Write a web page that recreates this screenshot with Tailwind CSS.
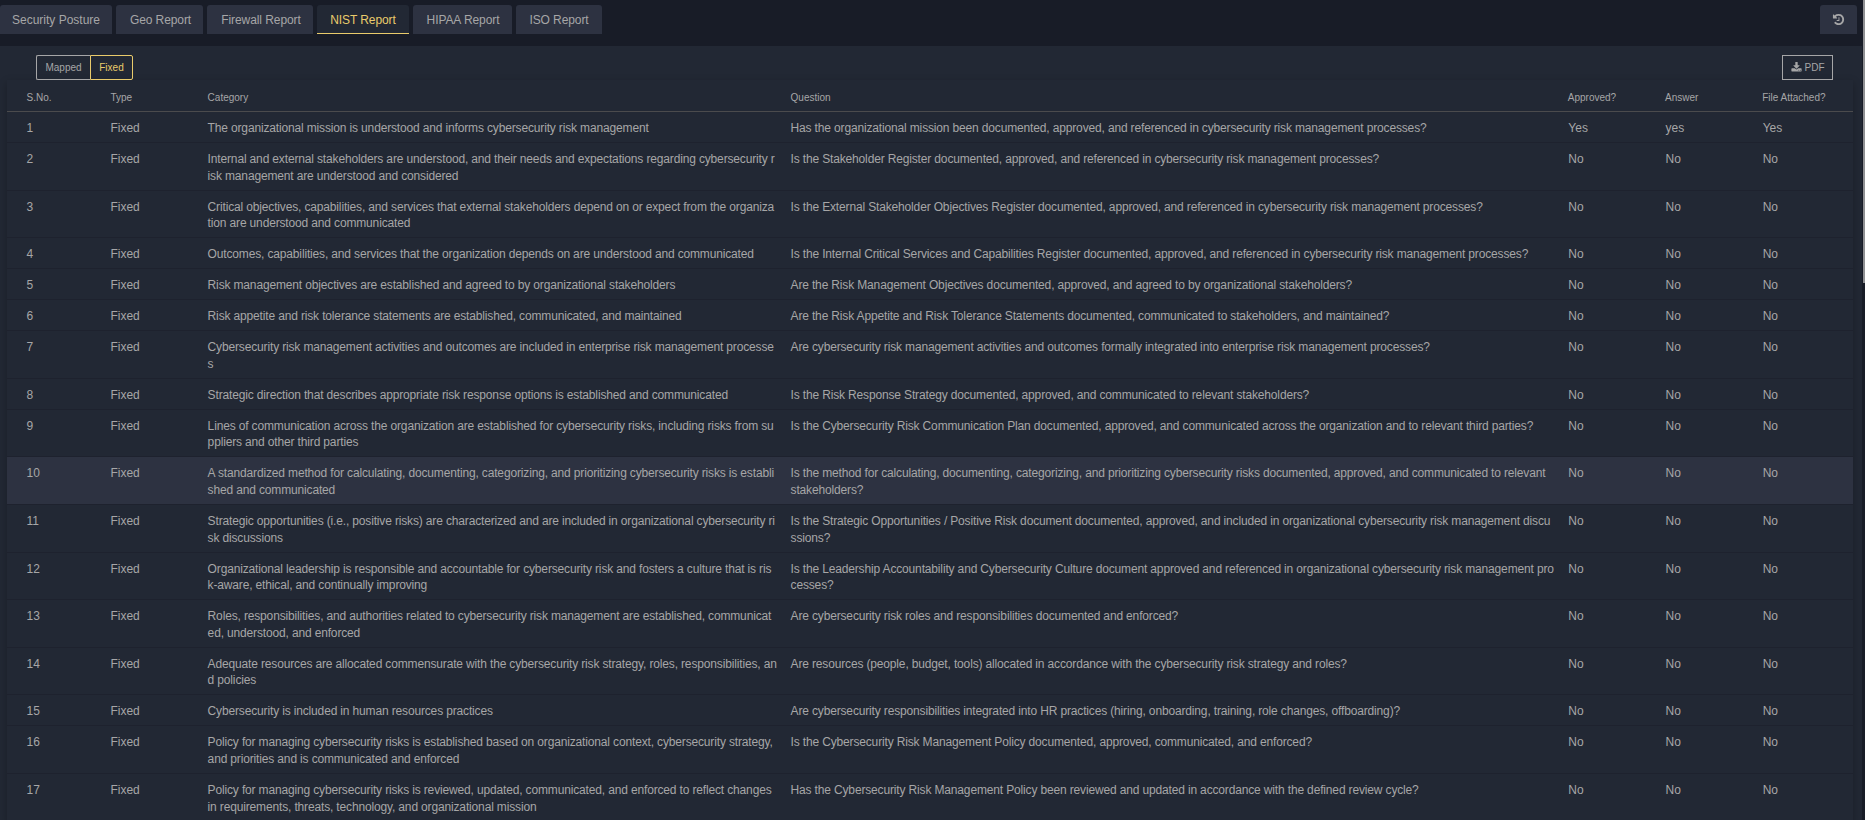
<!DOCTYPE html>
<html lang="en">
<head>
  <meta charset="UTF-8" />
  <meta name="viewport" content="width=device-width, initial-scale=1.0" />
  <title>NIST Report</title>
  <script src="https://cdn.jsdelivr.net/npm/@tailwindcss/browser@4"></script>
</head>
<body class="relative h-screen overflow-hidden bg-[#181c27] font-['Liberation_Sans',Arial,sans-serif] text-xs text-[#a6a6a7]">

  <!-- Report tabs -->
  <nav class="flex h-[46px] items-start gap-1 pt-[5px] pr-2 tracking-[-0.08px]">
    <button class="h-[29px] rounded-t-[3px] bg-[#2d3241] w-28 tracking-normal">Security Posture</button>
    <button class="h-[29px] rounded-t-[3px] bg-[#2d3241] w-[87px] pl-0.5">Geo Report</button>
    <button class="h-[29px] rounded-t-[3px] bg-[#2d3241] w-[106px] pl-0.5">Firewall Report</button>
    <button class="h-[29px] rounded-t-[3px] bg-[#222834] w-[92px] border-b border-[#e9cb6b] pt-px text-[#e9cb6b]">NIST Report</button>
    <button class="h-[29px] rounded-t-[3px] bg-[#2d3241] w-[99px] pl-px">HIPAA Report</button>
    <button class="h-[29px] rounded-t-[3px] bg-[#2d3241] w-[86px]">ISO Report</button>
    <button class="ml-auto flex h-[29px] w-[37px] items-center justify-center rounded-t-[3px] bg-[#2d3241]" aria-label="History">
      <svg class="size-[13px]" viewBox="0 0 1792 1792" fill="currentColor"><path d="M1664 896q0 156-61 298t-164 245-245 164-298 61q-172 0-327-72.5t-264-204.5q-7-10-6.5-22.5t8.500-20.500l137-138q10-9 25-9 16 2 23 12 73 95 179 147t225 52q104 0 198.500-40.500t163.500-109.500 109.500-163.500 40.500-198.500-40.500-198.500-109.500-163.500-163.500-109.500-198.500-40.500q-98 0-188 35.500t-160 101.500l137 138q31 30 14 69-17 40-59 40h-448q-26 0-45-19t-19-45v-448q0-42 40-59 39-17 69 14l130 129q107-101 244.500-156.500t284.500-55.500q156 0 298 61t245 164 164 245 61 298zm-640-288v448q0 14-9 23t-23 9h-320q-14 0-23-9t-9-23v-64q0-14 9-23t23-9h224v-352q0-14 9-23t23-9h64q14 0 23 9t9 23z"/></svg>
    </button>
  </nav>

  <main class="mr-[3px] bg-[#222834]">
    <div class="flex h-[34px] items-end justify-between pr-[29px] pl-9 text-[10px]">
      <div class="flex">
        <button class="h-[25px] w-[54px] rounded-l-[2px] border border-r-0 border-[#a6a6a7]">Mapped</button>
        <button class="h-[25px] w-[43px] rounded-r-[2px] border border-[#e9cb6b] text-[#e9cb6b]">Fixed</button>
      </div>
      <button class="flex h-[25px] w-[51px] items-center justify-center gap-[3px] border border-[#a6a6a7]">
        <svg class="size-[11px]" viewBox="0 0 1792 1792" fill="currentColor"><path d="M1344 1344q0-26-19-45t-45-19-45 19-19 45 19 45 45 19 45-19 19-45zm256 0q0-26-19-45t-45-19-45 19-19 45 19 45 45 19 45-19 19-45zm128-224v320q0 40-28 68t-68 28h-1472q-40 0-68-28t-28-68v-320q0-40 28-68t68-28h465l135 136q58 56 136 56t136-56l136-136h464q40 0 68 28t28 68zm-325-569q17 41-14 70l-448 448q-18 19-45 19t-45-19l-448-448q-31-29-14-70 17-39 59-39h256v-448q0-26 19-45t45-19h256q26 0 45 19t19 45v448h256q42 0 59 39z"/></svg>
        PDF
      </button>
    </div>

    <!-- Fixed controls table -->
    <section class="mr-[9px] ml-[7px] min-h-[740px] shadow-[0_3px_8px_rgba(0,0,0,0.25)]">
      <div class="grid h-8 grid-cols-[1fr_1fr_6fr_8fr_1fr_1fr_1fr] items-center border-b border-[#4b4b4d] pt-[5px] text-[10px] *:px-[6.300px]">
        <div class="pl-[19.500px]!">S.No.</div>
        <div>Type</div>
        <div>Category</div>
        <div>Question</div>
        <div>Approved?</div>
        <div>Answer</div>
        <div class="whitespace-nowrap">File Attached?</div>
      </div>
      <div id="rows"></div>
    </section>
  </main>

  <!-- Scroll thumb -->
  <div class="absolute top-0 right-0 h-[283px] w-[2px] bg-[#8f9093]"></div>

  <script>
    const controls = [
      ["The organizational mission is understood and informs cybersecurity risk management", "Has the organizational mission been documented, approved, and referenced in cybersecurity risk management processes?"],
      ["Internal and external stakeholders are understood, and their needs and expectations regarding cybersecurity r<br>isk management are understood and considered", "Is the Stakeholder Register documented, approved, and referenced in cybersecurity risk management processes?"],
      ["Critical objectives, capabilities, and services that external stakeholders depend on or expect from the organiza<br>tion are understood and communicated", "Is the External Stakeholder Objectives Register documented, approved, and referenced in cybersecurity risk management processes?"],
      ["Outcomes, capabilities, and services that the organization depends on are understood and communicated", "Is the Internal Critical Services and Capabilities Register documented, approved, and referenced in cybersecurity risk management processes?"],
      ["Risk management objectives are established and agreed to by organizational stakeholders", "Are the Risk Management Objectives documented, approved, and agreed to by organizational stakeholders?"],
      ["Risk appetite and risk tolerance statements are established, communicated, and maintained", "Are the Risk Appetite and Risk Tolerance Statements documented, communicated to stakeholders, and maintained?"],
      ["Cybersecurity risk management activities and outcomes are included in enterprise risk management processe<br>s", "Are cybersecurity risk management activities and outcomes formally integrated into enterprise risk management processes?"],
      ["Strategic direction that describes appropriate risk response options is established and communicated", "Is the Risk Response Strategy documented, approved, and communicated to relevant stakeholders?"],
      ["Lines of communication across the organization are established for cybersecurity risks, including risks from su<br>ppliers and other third parties", "Is the Cybersecurity Risk Communication Plan documented, approved, and communicated across the organization and to relevant third parties?"],
      ["A standardized method for calculating, documenting, categorizing, and prioritizing cybersecurity risks is establi<br>shed and communicated", "Is the method for calculating, documenting, categorizing, and prioritizing cybersecurity risks documented, approved, and communicated to relevant<br>stakeholders?"],
      ["Strategic opportunities (i.e., positive risks) are characterized and are included in organizational cybersecurity ri<br>sk discussions", "Is the Strategic Opportunities / Positive Risk document documented, approved, and included in organizational cybersecurity risk management discu<br>ssions?"],
      ["Organizational leadership is responsible and accountable for cybersecurity risk and fosters a culture that is ris<br>k-aware, ethical, and continually improving", "Is the Leadership Accountability and Cybersecurity Culture document approved and referenced in organizational cybersecurity risk management pro<br>cesses?"],
      ["Roles, responsibilities, and authorities related to cybersecurity risk management are established, communicat<br>ed, understood, and enforced", "Are cybersecurity risk roles and responsibilities documented and enforced?"],
      ["Adequate resources are allocated commensurate with the cybersecurity risk strategy, roles, responsibilities, an<br>d policies", "Are resources (people, budget, tools) allocated in accordance with the cybersecurity risk strategy and roles?"],
      ["Cybersecurity is included in human resources practices", "Are cybersecurity responsibilities integrated into HR practices (hiring, onboarding, training, role changes, offboarding)?"],
      ["Policy for managing cybersecurity risks is established based on organizational context, cybersecurity strategy,<br>and priorities and is communicated and enforced", "Is the Cybersecurity Risk Management Policy documented, approved, communicated, and enforced?"],
      ["Policy for managing cybersecurity risks is reviewed, updated, communicated, and enforced to reflect changes<br>in requirements, threats, technology, and organizational mission", "Has the Cybersecurity Risk Management Policy been reviewed and updated in accordance with the defined review cycle?"],
    ];

    const activeRow = 10;

    document.getElementById('rows').innerHTML = controls.map(([category, question], i) => {
      const n = i + 1;
      const answers = n === 1 ? ['Yes', 'yes', 'Yes'] : ['No', 'No', 'No'];
      return `
        <div class="grid grid-cols-[1fr_1fr_6fr_8fr_1fr_1fr_1fr] border-b border-[#1e222e] pt-[8px] pb-[5.420px] leading-[16.600px] *:px-[6.300px] ${n === activeRow ? 'bg-[#2d3241]' : ''}">
          <div class="pl-[19.500px]!">${n}</div>
          <div>Fixed</div>
          <div class="whitespace-nowrap tracking-[-0.153px]">${category}</div>
          <div class="whitespace-nowrap tracking-[-0.153px]">${question}</div>
          ${answers.map((a) => `<div class="pl-[6.800px]!">${a}</div>`).join('')}
        </div>`;
    }).join('');
  </script>

</body>
</html>
